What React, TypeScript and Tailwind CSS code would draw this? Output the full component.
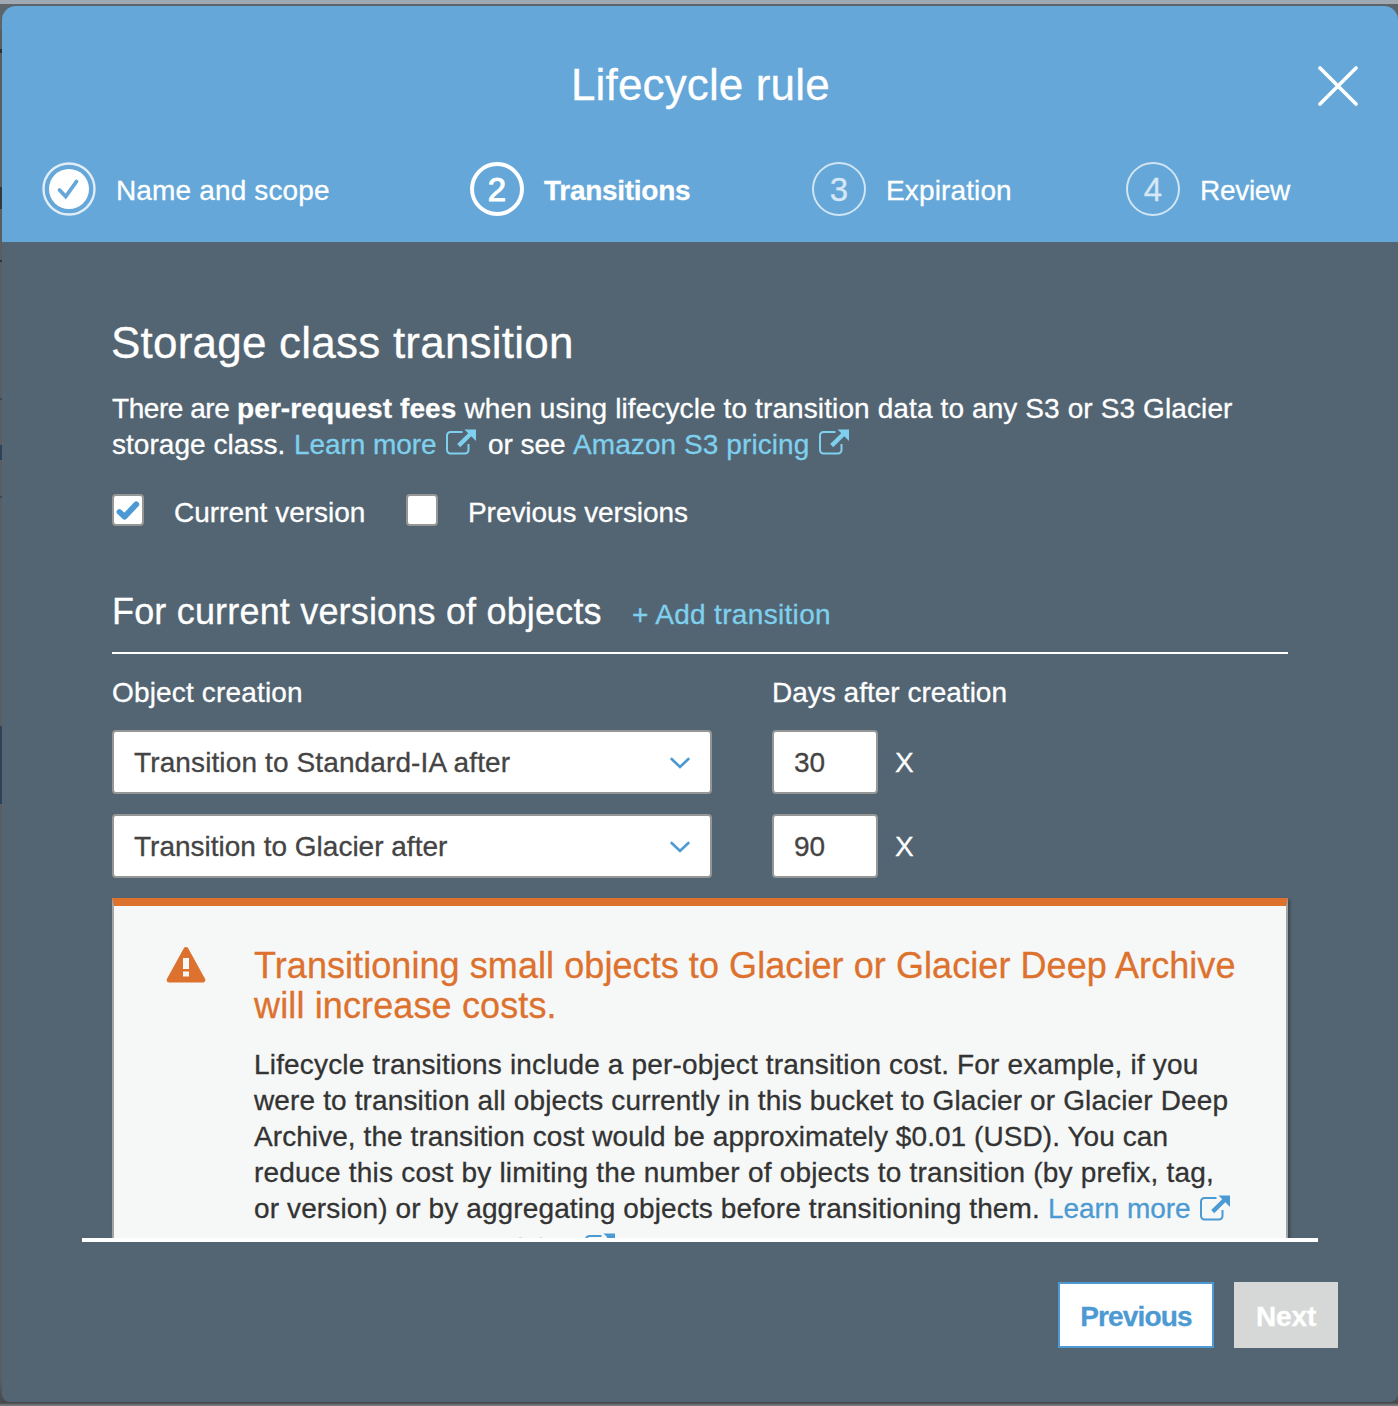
import type { ReactNode } from "react";

function ExternalIcon({ className = "" }: { className?: string }) {
  return (
    <svg viewBox="0 0 30 26" className={"inline-block h-[26px] w-[30px] shrink-0 " + className} fill="none" stroke="currentColor">
      <path d="M16.500 3H4.500A3.500 3.500 0 0 0 1 6.500V21a3.500 3.500 0 0 0 3.500 3.500H19a3.500 3.500 0 0 0 3.500-3.500V15" strokeWidth="2" />
      <path d="M12.700 16.600 25 4.500" strokeWidth="4.300" />
      <path d="M18.500 .5H30V12Z" fill="currentColor" stroke="none" />
    </svg>
  );
}

function Step({ n, label, tracking, active, done }: { n: string; label: string; tracking: string; active?: boolean; done?: boolean }) {
  return (
    <div className="flex h-[54px] items-center whitespace-nowrap">
      {done ? (
        <svg viewBox="0 0 54 54" className="size-[54px]" fill="none">
          <circle cx="27" cy="27" r="25.500" stroke="#fff" strokeOpacity=".8" strokeWidth="2.400" />
          <circle cx="27" cy="27" r="20" fill="#fff" />
          <path d="m17.500 28 6.200 6.500L34.500 19.500" stroke="#64a7d8" strokeWidth="3.800" strokeLinecap="round" />
        </svg>
      ) : (
        <div
          className={
            active
              ? "flex size-[54px] items-center justify-center rounded-full border-4 border-white text-[33px] leading-none [-webkit-text-stroke:1px_white]"
              : "flex size-[54px] items-center justify-center rounded-full border-[2.5px] border-white/70 text-[33px] leading-none text-[#d6e8f5]"
          }
        >
          {n}
        </div>
      )}
      <span className={"ml-5 pt-1 leading-9 " + tracking + (active ? " font-bold" : "")}>{label}</span>
    </div>
  );
}

function Checkbox({ checked }: { checked?: boolean }) {
  return (
    <span className="flex size-8 items-center justify-center rounded-[4px] border-2 border-[#959797] bg-white">
      {checked && (
        <svg viewBox="0 0 28 28" className="size-7 shrink-0" fill="none">
          <path d="m5.500 16 5 4.700L22.300 8.300" stroke="#4c9ad3" strokeWidth="5.800" strokeLinecap="round" strokeLinejoin="round" />
        </svg>
      )}
    </span>
  );
}

function TransitionRow({ label, tracking, days }: { label: string; tracking: string; days: string }) {
  return (
    <div className="flex h-16 items-center">
      <div className="flex h-16 w-[600px] items-center justify-between rounded-[4px] border-2 border-[#959797] bg-white px-5 pt-0.5 text-[#444]">
        <span className={"whitespace-nowrap leading-9 " + tracking}>{label}</span>
        <svg viewBox="0 0 20 12" className="h-3 w-5" fill="none">
          <path d="M.8 1.200 10 10l9.200-8.800" stroke="#4c9ad3" strokeWidth="2.700" />
        </svg>
      </div>
      <div className="ml-[60px] flex h-16 w-[106px] items-center rounded-[4px] border-2 border-[#959797] bg-white pt-0.5 pl-5 text-[#444]">{days}</div>
      <span className="ml-[17px] pt-0.5">X</span>
    </div>
  );
}

function Line({ tracking, children }: { tracking: string; children: ReactNode }) {
  return <span className={"block whitespace-nowrap " + tracking}>{children}</span>;
}

/* Sliver of the dimmed page that stays visible left of the dialog */
function PageEdge() {
  return (
    <div className="flex w-0.5 shrink-0 flex-col">
      <div className="mt-[49px] h-1 bg-[#2c3237]" />
      <div className="mt-[134px] h-[22px] bg-[#33383c]" />
      <div className="mt-[51px] h-0.5 bg-[#2c3237]" />
      <div className="mt-[136px] h-0.5 bg-[#34495a]" />
      <div className="mt-[45px] h-[15px] bg-[#2d4254]" />
      <div className="mt-9 h-0.5 bg-[#34495a]" />
      <div className="mt-[228px] h-[78px] bg-[#2d4254]" />
    </div>
  );
}

export default function App() {
  return (
    <div className="flex h-[1406px] w-[1398px] overflow-hidden bg-[linear-gradient(#a0a9b1_0px,#a0a9b1_4px,#5d656b_4px,#5d656b_30px,#5b5e60_30px,#5b5e60_1380px,#45494c_1403px,#75797c_1405px)] font-['Liberation_Sans',Arial,sans-serif] text-[28px] text-white [-webkit-text-stroke:0.3px]">
      <PageEdge />
      <div className="mt-1.5 flex h-[1396px] w-[1396px] flex-col overflow-hidden rounded-t-[14px] rounded-b-[8px] bg-[#536572]">
        <header className="h-[236px] shrink-0 bg-[#64a7d8]">
          <div className="flex h-[156px] items-start pt-[49px]">
            <h1 className="ml-[569px] text-[44px] leading-[60px] tracking-[0.14px] whitespace-nowrap">Lifecycle rule</h1>
            <svg viewBox="0 0 40 40" className="mt-[11px] mr-10 ml-auto size-10" fill="none">
              <path d="M2 2 38 38M38 2 2 38" stroke="#fff" strokeWidth="3.600" strokeLinecap="round" />
            </svg>
          </div>
          <nav className="grid grid-cols-[428px_342px_314px_auto] pl-10">
            <Step n="1" label="Name and scope" tracking="tracking-[0.145px]" done />
            <Step n="2" label="Transitions" tracking="tracking-[-0.279px]" active />
            <Step n="3" label="Expiration" tracking="tracking-[0.13px]" />
            <Step n="4" label="Review" tracking="tracking-[-0.3px]" />
          </nav>
        </header>

        <main className="mx-20 h-[996px] shrink-0 overflow-hidden px-[30px] pt-[71px]">
          <h2 className="-ml-px text-[44px] leading-[60px] tracking-[0.22px]">Storage class transition</h2>
          <p className="mt-[18px] leading-9">
            <span className="flex h-9 whitespace-nowrap">
              <span className="w-[125px] tracking-[-0.45px]">There are</span>
              <b className="w-[227.500px] tracking-[0.1px]">per-request fees</b>
              <span className="tracking-[0.11px]">when using lifecycle to transition data to any S3 or S3 Glacier</span>
            </span>
            <span className="flex h-9 whitespace-nowrap">
              <span className="w-[182px] tracking-[0.041px]">storage class.</span>
              <a className="flex w-[194px] tracking-[-0.068px] text-[#7ed0ee]">
                Learn more
                <ExternalIcon className="mt-0.5 ml-[9.500px]" />
              </a>
              <span className="w-[85px] tracking-[-0.05px]">or see</span>
              <a className="flex tracking-[0.08px] text-[#7ed0ee]">
                Amazon S3 pricing
                <ExternalIcon className="mt-0.5 ml-[9.500px]" />
              </a>
            </span>
          </p>

          <div className="mt-[31px] flex h-9 leading-9">
            <label className="flex w-[294px]">
              <Checkbox checked />
              <span className="mt-px ml-[30px]">Current version</span>
            </label>
            <label className="flex">
              <Checkbox />
              <span className="mt-px ml-[30px] tracking-[-0.061px]">Previous versions</span>
            </label>
          </div>

          <div className="mt-[60px] flex h-16 items-baseline border-b-2 border-white pt-0.5">
            <h3 className="w-[520px] text-[36px] leading-10 tracking-[0.18px]">For current versions of objects</h3>
            <a className="tracking-[0.32px] text-[#7ed0ee]">+ Add transition</a>
          </div>

          <div className="mt-[21px] flex h-9 leading-9">
            <span className="w-[660px] tracking-[0.161px]">Object creation</span>
            <span>Days after creation</span>
          </div>
          <div className="mt-[19px] flex flex-col gap-5">
            <TransitionRow label="Transition to Standard-IA after" tracking="tracking-[0.12px]" days="30" />
            <TransitionRow label="Transition to Glacier after" tracking="tracking-[0px]" days="90" />
          </div>

          <section className="mt-5 flex h-[400px] w-[1176px] border-2 border-t-8 border-[#a3a5a5] border-t-[#dd712e] bg-[#f6f8f7] shadow-[2px_2px_3px_rgba(0,0,0,0.3)]">
            <svg viewBox="0 0 40 37" className="mt-[40px] ml-[52px] h-[37px] w-10 shrink-0">
              <path d="M20 3.500 36.800 34H3.200Z" fill="#dd712e" stroke="#dd712e" strokeWidth="5" strokeLinejoin="round" />
              <path d="M17 12h6v11h-6zM17 25.500h6v5h-6z" fill="#f6f8f7" />
            </svg>
            <div className="ml-12 pt-[40px]">
              <h3 className="text-[36px] leading-10 text-[#dd712e]">
                <Line tracking="tracking-[0.072px]">Transitioning small objects to Glacier or Glacier Deep Archive</Line>
                <Line tracking="tracking-[0.13px]">will increase costs.</Line>
              </h3>
              <div className="mt-[21px] leading-9 text-[#333]">
                <Line tracking="tracking-[0.175px]">Lifecycle transitions include a per-object transition cost. For example, if you</Line>
                <Line tracking="tracking-[0.132px]">were to transition all objects currently in this bucket to Glacier or Glacier Deep</Line>
                <Line tracking="tracking-[0.072px]">Archive, the transition cost would be approximately $0.01 (USD). You can</Line>
                <Line tracking="tracking-[0.208px]">reduce this cost by limiting the number of objects to transition (by prefix, tag,</Line>
                <div className="flex whitespace-nowrap">
                  <span className="w-[794px] tracking-[0.12px]">or version) or by aggregating objects before transitioning them.</span>
                  <a className="flex tracking-[-0.068px] text-[#4c9ad3]">
                    Learn more
                    <ExternalIcon className="mt-1 ml-[9.500px]" />
                  </a>
                </div>
                <div className="mt-1 flex whitespace-nowrap">
                  <span className="w-[84px]">or see</span>
                  <a className="flex tracking-[0.129px] text-[#4c9ad3]">
                    Amazon S3 pricing
                    <ExternalIcon className="mt-0.5 ml-[9.500px]" />
                  </a>
                </div>
              </div>
            </div>
          </section>
        </main>

        <footer className="mx-20 flex justify-end gap-5 border-t-4 border-white pt-10 font-bold">
          <button className="h-[66px] w-[156px] border-2 border-[#4c9ad3] bg-white pt-1 tracking-[-0.85px] text-[#4c9ad3]">Previous</button>
          <button className="-mr-5 h-[66px] w-[104px] bg-[#d6d8d7] pt-1 tracking-[-0.12px] text-white">Next</button>
        </footer>
      </div>
    </div>
  );
}
